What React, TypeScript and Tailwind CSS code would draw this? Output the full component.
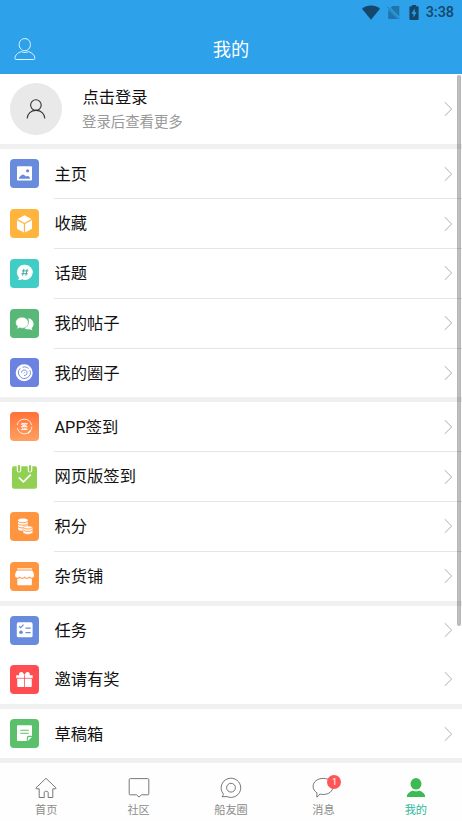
import type { ReactNode } from 'react';

function Chevron() {
  return (
    <svg className="mr-[9px] h-4 w-[9px] shrink-0" viewBox="0 0 9 16" fill="none" stroke="#acacac" strokeWidth="1">
      <path d="M.8 1.2 7.7 8 .8 14.8" />
    </svg>
  );
}

function Glyph({ children }: { children: ReactNode }) {
  return (
    <svg className="h-[29px] w-[29px]" viewBox="0 0 29 29" fill="#fff">
      {children}
    </svg>
  );
}

type Item = { label: string; color: string; icon: ReactNode };

const content: Item[] = [
  {
    label: '主页',
    color: 'bg-[#688bdd]',
    icon: (
      <Glyph>
        <rect x="7" y="7.3" width="15" height="14.2" rx="1" />
        <path d="M8.7 19.8c.5-2 1.8-3 3-3.8 1-.8 2-.7 2.8.2l1.3 1.4c1.4-1 2.8-.6 4.1.9v1.3z" fill="#688bdd" />
        <circle cx="17.6" cy="11.8" r="1.6" fill="#688bdd" />
      </Glyph>
    ),
  },
  {
    label: '收藏',
    color: 'bg-[#ffb53d]',
    icon: (
      <Glyph>
        <path d="m14.5 6.3 7 3.8-7 3.8-7-3.8zM7 11.3l6.9 3.8v8.4L7 19.7zM22 11.3l-6.9 3.8v8.4l6.9-3.8z" />
      </Glyph>
    ),
  },
  {
    label: '话题',
    color: 'bg-[#40cdc5]',
    icon: (
      <Glyph>
        <path d="M15 5.7a7.6 7.6 0 1 1-3 14.5c-1.2.8-2.4 1-4 .9.7-.7 1-1.7.8-2.8A7.6 7.6 0 0 1 15 5.7z" />
        <path d="m13.9 9.9-1.3 6.7M17.2 9.9l-1.3 6.7M11.9 11.9h6.4M11.4 14.7h6.4" stroke="#40a9a6" fill="none" />
      </Glyph>
    ),
  },
  {
    label: '我的帖子',
    color: 'bg-[#57b878]',
    icon: (
      <Glyph>
        <path d="M18.2 9.2c3.2.3 5.4 2.8 5.4 5.7 0 1.8-.8 3.2-2 4.2l.8 2.1-2.8-1c-2.2.5-4.3-.1-5.5-1.5 3.6-.8 5.8-5 4.1-9.5z" />
        <path d="M12 8.2c3.6 0 6.3 2.4 6.3 5.5s-2.7 5.5-6.3 5.5c-.8 0-1.6-.1-2.3-.4L6.8 20l.8-2.4a5 5 0 0 1-1.9-3.9c0-3.1 2.7-5.5 6.3-5.5z" stroke="#57b878" strokeWidth=".5" />
      </Glyph>
    ),
  },
  {
    label: '我的圈子',
    color: 'bg-[#6b82e1]',
    icon: (
      <Glyph>
        <circle cx="14.2" cy="14.7" r="8.5" />
        <g fill="none" stroke="#6b82e1" strokeWidth=".9">
          <path d="M10.3 10.3a5.9 5.9 0 1 0 9.6 2M12.5 9.3c2.3-.9 4.4-.3 6 1.2" />
          <path d="M11.5 14.6c.1-1.6 1.2-2.6 2.8-2.6 1.7 0 2.8 1.3 2.8 2.7 0 1.8-1.3 2.8-3 2.8M14.6 14.4l-.8.8" />
        </g>
      </Glyph>
    ),
  },
];

const points: Item[] = [
  {
    label: 'APP签到',
    color: 'bg-linear-to-b from-[#ff7137] to-[#ffa061]',
    icon: (
      <Glyph>
        <g fill="none" stroke="#fff" strokeWidth=".8">
          <path d="M17.2 21.4a7.3 7.3 0 0 1-9.9-5.4M7.2 13a7.3 7.3 0 0 1 14.3 0M21.8 14.5c0 1.4-.3 2.5-.9 3.5" />
          <path d="m17.6 21.5 3.2-3.1" strokeWidth="1.4" />
        </g>
        <text x="14.5" y="17.3" fontSize="7.3" fontWeight="700" textAnchor="middle" className="font-['Noto_Sans_CJK_SC',sans-serif]">签</text>
      </Glyph>
    ),
  },
  {
    label: '网页版签到',
    color: 'bg-transparent',
    icon: (
      <Glyph>
        <path d="M4 4.2h21a2 2 0 0 1 2 2v18.5a2 2 0 0 1-2 2H4a2 2 0 0 1-2-2V6.2a2 2 0 0 1 2-2z" fill="#91d052" />
        <path d="M9 3.5v4.7M20 3.5v4.7" stroke="#fff" strokeWidth="4.6" strokeLinecap="round" />
        <path d="M9 4.1v4.6M20 4.1v4.6" stroke="#91d052" strokeWidth="2.3" strokeLinecap="round" />
        <path d="m8.8 15.5 4.6 4.3 7.3-7.2" fill="none" stroke="#fff" strokeWidth="1.7" />
      </Glyph>
    ),
  },
  {
    label: '积分',
    color: 'bg-[#ff953f]',
    icon: (
      <Glyph>
        <path d="M8 8.3c0-2.4 9.8-2.4 9.8 0v9.2c-1 1.8-9.8 1.8-9.8-.6z" />
        <path d="M8 9.4c1.4 1.7 8.4 1.7 9.8 0M8 12c1.4 1.7 8.4 1.7 9.8 0M8 14.7c1.4 1.7 8.4 1.7 9.8 0" fill="none" stroke="#ff953f" strokeWidth=".9" />
        <path d="M13 15.8c0-2.5 9.8-2.5 9.8 0v4.6c0 2.4-9.8 2.4-9.8 0z" stroke="#ff953f" strokeWidth=".6" />
        <path d="M13.5 15.8c1.4 1.7 7.4 1.7 8.8 0M13.5 18.2c1.4 1.7 7.4 1.7 8.8 0" fill="none" stroke="#ff953f" strokeWidth=".9" />
      </Glyph>
    ),
  },
  {
    label: '杂货铺',
    color: 'bg-[#ff953f]',
    icon: (
      <Glyph>
        <path d="M7.3 6.2h14.8v1.4H7.3zM7 8.6h15.2c1 1.1 1.8 3.2 1.8 4.8 0 2.6-3.4 3-4.6.8-1.1 2-3.8 2-4.8 0-1 2-3.8 2-4.8 0-1.2 2.2-4.7 1.8-4.7-.8 0-1.6.8-3.7 1.9-4.8z" />
        <path d="M7.3 16.7c1 .1 1.8-.2 2.5-.8 1.5 1.2 3.3 1.2 4.8 0 1.5 1.2 3.3 1.2 4.8 0 .7.5 1.6.8 2.5.8v5.5a1 1 0 0 1-1 1H8.3a1 1 0 0 1-1-1z" />
      </Glyph>
    ),
  },
];

const tasks: Item[] = [
  {
    label: '任务',
    color: 'bg-[#688bdd]',
    icon: (
      <Glyph>
        <rect x="6.8" y="6.3" width="15.8" height="15" rx="1.6" />
        <path d="m9 10.2 1.7 1.4 2.8-3M15.5 12.2h5.2M15.5 16.6h5.2" fill="none" stroke="#688bdd" strokeWidth="1.2" />
        <circle cx="11" cy="16.2" r="1.8" fill="#688bdd" />
      </Glyph>
    ),
  },
  {
    label: '邀请有奖',
    color: 'bg-[#ff4d52]',
    icon: (
      <Glyph>
        <path d="M6.2 10.2h2.9c-.8-2.2 1.7-4.3 3.6-2.8.8.6 1.3 1.6 1.7 2.5.4-.9 1-1.9 1.8-2.5 1.9-1.5 4.4.6 3.6 2.8h2.9v3.3H6.2z" />
        <path d="M7.2 13h14.6v8a1 1 0 0 1-1 1H8.2a1 1 0 0 1-1-1z" />
        <path d="M14.5 10.2V22M6.2 13.3h16.6" stroke="#ff4d52" strokeWidth=".8" />
      </Glyph>
    ),
  },
];

const drafts: Item[] = [
  {
    label: '草稿箱',
    color: 'bg-[#5bc06b]',
    icon: (
      <Glyph>
        <path d="M8 6.2h13a1 1 0 0 1 1 1v9.6h-3.6a1.6 1.6 0 0 0-1.6 1.6V22H8a1 1 0 0 1-1-1V7.2a1 1 0 0 1 1-1z" />
        <path d="M10.3 11.2h8.5M10.3 14.3h8.5" fill="none" stroke="#5bc06b" strokeWidth="1.1" />
        <path d="M17.9 21.9v-3a1 1 0 0 1 1-1H22z" />
      </Glyph>
    ),
  },
];

function Group({ items, size, plain }: { items: Item[]; size: string; plain?: boolean }) {
  return (
    <section className={`flex shrink-0 flex-col bg-white pt-[0.4px] ${size}`}>
      {items.map((item, i) => (
        <div key={item.label} className={`flex shrink-0 items-center pl-[10px] ${plain ? 'h-[49.3px]' : 'h-[49.8px]'}`}>
          <div className={`mb-px h-[29px] w-[29px] shrink-0 overflow-hidden rounded-[4px] ${item.color}`}>{item.icon}</div>
          <div
            className={`ml-[15px] flex flex-1 items-center justify-between self-stretch border-b ${
              i < items.length - 1 && !plain ? 'border-[#e6e6e6]' : 'border-transparent'
            }`}
          >
            <span className="pt-[2px] pl-[0.5px] text-[16.3px] leading-none text-[#111]">{item.label}</span>
            <Chevron />
          </div>
        </div>
      ))}
    </section>
  );
}

function Tab({ label, active, children }: { label: string; active?: boolean; children: ReactNode }) {
  return (
    <div className="flex flex-1 flex-col items-center pt-[13px]">
      <div className="relative h-6 w-6">{children}</div>
      <span className={`mt-[5px] text-[11.2px] leading-3 ${active ? 'text-[#2eb999]' : 'text-[#8c8c8c]'}`}>{label}</span>
    </div>
  );
}

function Outline({ children }: { children: ReactNode }) {
  return (
    <svg className="h-6 w-6" viewBox="0 0 24 24" fill="none" stroke="#555" strokeWidth=".8">
      {children}
    </svg>
  );
}

export default function App() {
  return (
    <div className="relative flex h-[821px] w-[462px] flex-col gap-[5px] overflow-hidden bg-[#f0f0f0] font-[Roboto,'Noto_Sans_CJK_SC',sans-serif]">
      <div className="shrink-0">
        <header className="flex h-[74px] flex-col bg-[#2da1ea]">
          <div className="flex h-[25px] items-center justify-end pr-[8px] text-[#14486a]">
            <svg className="h-[15px] w-[18px]" viewBox="0 0 18 15" fill="currentColor">
              <path d="M0 3.7C5.2-.7 12.8-.7 18 3.7L9 14.7z" />
            </svg>
            <svg className="ml-[7px] h-[15px] w-[13px] opacity-50" viewBox="0 0 13 15">
              <path d="M5.5 1h6a.8.8 0 0 1 .8.8v9.8L3.7 2.8zM1.3 4.6 10.7 14H2a.8.8 0 0 1-.8-.8z" fill="currentColor" />
              <path d="m.4 1.8 12 12.4" stroke="currentColor" />
            </svg>
            <svg className="ml-[9px] h-[15px] w-[10px]" viewBox="0 0 10 15">
              <path d="M3 0h4v1.2h1.6a1 1 0 0 1 1 1V14a1 1 0 0 1-1 1H1.4a1 1 0 0 1-1-1V2.2a1 1 0 0 1 1-1H3z" fill="currentColor" />
              <path d="M5.7 3.5 2.4 8.7h2v3.8l3.2-5.3H5.7z" fill="#2da1ea" />
            </svg>
            <span className="ml-[7px] pt-[2px] text-[14.4px] font-medium leading-none">3:38</span>
          </div>
          <div className="grid h-[49px] grid-cols-3 items-center">
            <svg className="mb-[2px] ml-[14px] h-6 w-[22px]" viewBox="0 0 22 24" fill="none" stroke="#e9f6ff" strokeWidth="1">
              <path d="M10.8 1.6c3.4 0 5.6 2.6 5.6 6s-2.3 6.1-5.6 6.1-5.6-2.7-5.6-6.1 2.2-6 5.6-6z" />
              <path d="M7.3 14.7C3.5 15.7 1 18.3 1 21.2c0 1 .3 1.3 1.2 1.3h17.4c.9 0 1.2-.3 1.2-1.3 0-2.9-2.5-5.5-6.3-6.5-2.3.9-4.9.9-7.2 0z" />
            </svg>
            <h1 className="pt-[2px] text-center text-[18.2px] font-normal leading-none text-white">我的</h1>
          </div>
        </header>
        <div className="flex h-[70px] items-center bg-white pl-[10px]">
          <div className="flex h-[52px] w-[52px] items-center justify-center rounded-full bg-[#e9e9e9]">
            <svg className="mb-px h-[22px] w-5" viewBox="0 0 20 22" fill="none" stroke="#333" strokeWidth="1.1">
              <circle cx="9.9" cy="7.1" r="5.3" />
              <path d="M1.1 20.6c.2-5 4-8.2 8.9-8.2s8.7 3.2 8.9 8.2" />
            </svg>
          </div>
          <div className="ml-5 flex flex-1 flex-col gap-[10px] pt-[2px]">
            <span className="pl-[0.5px] text-[16.3px] leading-none text-[#111]">点击登录</span>
            <span className="text-[14.4px] leading-none text-[#999]">登录后查看更多</span>
          </div>
          <Chevron />
        </div>
      </div>

      <Group items={content} size="h-[248px]" />
      <Group items={points} size="h-[198.5px]" />
      <Group items={tasks} size="h-[98.5px]" plain />
      <Group items={drafts} size="h-[49px]" />

      <nav className="flex h-[58px] shrink-0 bg-[#fefefe]">
        <Tab label="首页">
          <Outline>
            <path d="M1.8 12.1 12 2.3l10.2 9.8-.6.7h-2.8v8.7h-4.6v-4.6c0-1-.6-1.6-1.6-1.6h-.8c-1 0-1.6.6-1.6 1.6v4.6H5.2v-8.7H2.4z" />
          </Outline>
        </Tab>
        <Tab label="社区">
          <Outline>
            <path d="M3.4 2.6h17.2c.8 0 1.2.4 1.2 1.2v14c0 .7-.4 1-1.2 1h-6L12 21l-2.6-2.2h-6c-.8 0-1.2-.3-1.2-1v-14c0-.8.4-1.2 1.2-1.2z" />
          </Outline>
        </Tab>
        <Tab label="船友圈">
          <Outline>
            <path d="M4.2 17.7a9.8 9.6 0 1 1 3.8 2.9l-5 .1c.9-.8 1.3-1.8 1.2-3z" />
            <circle cx="12" cy="11.7" r="4.4" />
          </Outline>
        </Tab>
        <Tab label="消息">
          <Outline>
            <path d="M12.2 2.4c5.7 0 9.8 3.4 9.8 8s-4.1 8.1-9.8 8.1c-1.2 0-2.3-.2-3.3-.5-.7 1.2-1.7 2.1-3 3.1v-4.3c-2.4-1.5-3.8-3.8-3.8-6.4 0-4.6 4.3-8 10.1-8z" />
          </Outline>
          <span className="absolute -top-px left-[16px] flex h-[14px] w-[14px] items-center justify-center rounded-full bg-[#ff5556] text-[9px] leading-none text-white">1</span>
        </Tab>
        <Tab label="我的" active>
          <svg className="h-6 w-6" viewBox="0 0 24 24" fill="#3dbb53">
            <ellipse cx="12" cy="7.8" rx="5.5" ry="5.8" />
            <path d="M2.8 21c0-3.4 2.9-5.5 6.1-6.3 2 .8 4.2.8 6.2 0 3.2.8 6.1 2.9 6.1 6.3z" />
          </svg>
        </Tab>
      </nav>

      <div className="absolute top-[75px] right-px h-[551px] w-[4px] rounded-full border border-black/5 bg-black/25" />
    </div>
  );
}
